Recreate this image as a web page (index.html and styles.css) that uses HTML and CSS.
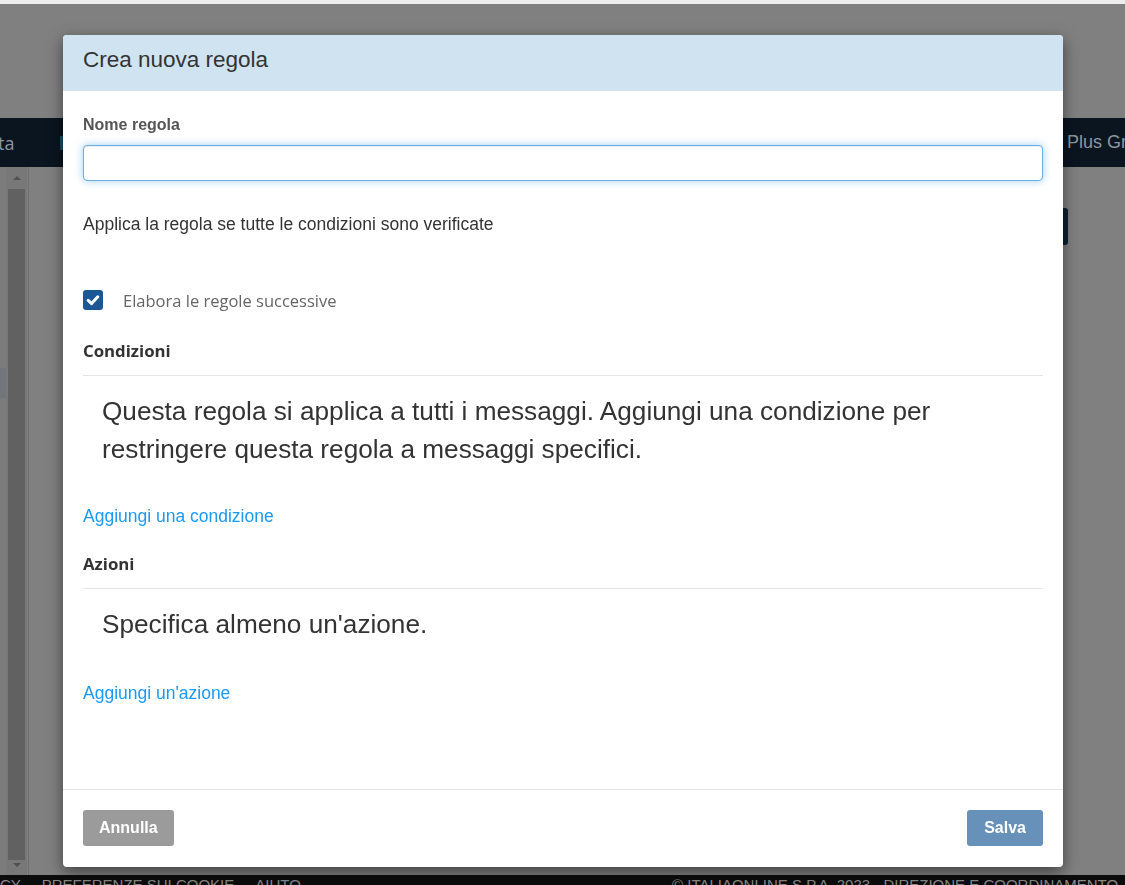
FILE: index.html
```html
<!DOCTYPE html>
<html lang="it">
<head>
<meta charset="UTF-8">
<meta name="viewport" content="width=device-width, initial-scale=1.0">
<title>Crea nuova regola</title>
<link rel="stylesheet" href="styles.css">
</head>
<body>

<div class="page">
    <div class="topline"></div>
    <div class="masthead"></div>

    <nav class="navbar">
        <span class="nav-cut">ta</span>
        <span class="nav-tab"><span class="nav-tab-mark"></span></span>
        <span class="nav-right">Plus Gr</span>
    </nav>

    <div class="main">
        <aside class="sidebar">
            <div class="side-strip"><div class="side-mark"></div></div>
            <div class="scrollbar">
                <span class="arrow arrow-up"></span>
                <div class="thumb"></div>
                <span class="arrow arrow-down"></span>
            </div>
        </aside>
        <div class="content">
            <span class="bg-btn"></span>
        </div>
    </div>

    <footer class="site-footer">
        <div class="footer-left">
            <span class="footer-cut">PRIVACY</span>
            <span>-</span>
            <span>PREFERENZE SUI COOKIE</span>
            <span>-</span>
            <span>AIUTO</span>
        </div>
        <div class="footer-right">© ITALIAONLINE S.P.A. 2023 - DIREZIONE E COORDINAMENTO</div>
    </footer>
</div>

<!-- Finestra modale -->
<div class="modal">
    <div class="modal-header">
        <h2 class="modal-title">Crea nuova regola</h2>
    </div>

    <div class="modal-body">
        <label class="field-label" for="nome">Nome regola</label>
        <input class="field-input" id="nome" type="text">

        <p class="apply-text">Applica la regola se tutte le condizioni sono verificate</p>

        <div class="check-row">
            <svg class="check-box" width="20" height="20" viewBox="0 0 20 20">
                <rect width="20" height="20" rx="3" fill="#1b5795"/>
                <path d="M5.2 10.4 L8.6 13.6 L14.8 6.8" fill="none" stroke="#ffffff" stroke-width="3" stroke-linecap="round" stroke-linejoin="round"/>
            </svg>
            <span class="check-label">Elabora le regole successive</span>
        </div>

        <section class="rule-section first">
            <h4 class="section-title">Condizioni</h4>
            <p class="empty-note">Questa regola si applica a tutti i messaggi. Aggiungi una condizione per restringere questa regola a messaggi specifici.</p>
            <a class="add-link" href="#">Aggiungi una condizione</a>
        </section>

        <section class="rule-section">
            <h4 class="section-title">Azioni</h4>
            <p class="empty-note">Specifica almeno un'azione.</p>
            <a class="add-link last" href="#">Aggiungi un'azione</a>
        </section>
    </div>

    <div class="modal-footer">
        <button class="btn btn-annulla">Annulla</button>
        <button class="btn btn-salva">Salva</button>
    </div>
</div>

</body>
</html>
```

FILE: styles.css
```css
/* Pagina di sfondo (oscurata dal modale) */
body {
    margin: 0;
    height: 885px;
    overflow: hidden;
    background-color: #808080;
    font-family: "Liberation Sans", Arial, sans-serif;
    color: #333333;
}

.page {
    display: flex;
    flex-direction: column;
    height: 885px;
}

.page > * {
    flex-shrink: 0;
}

.topline {
    height: 4px;
    background-color: #ededed;
}

.masthead {
    height: 114px;
}

/* Barra di navigazione */
.navbar {
    height: 49px;
    display: flex;
    align-items: center;
    background-color: #0a1520;
    overflow: hidden;
    white-space: nowrap;
    font-size: 18px;
    color: #8d959e;
}

.nav-cut {
    flex: 0 0 62px;
    margin-left: -2px;
    font-family: "Open Sans", sans-serif;
}

.nav-tab {
    flex: 0 0 1007px;
    display: flex;
}

.nav-tab-mark {
    width: 20px;
    height: 14px;
    background-color: #17506e;
}

.nav-right {
    flex: 0 0 auto;
}

/* Area principale */
.main {
    height: 708px;
    display: flex;
}

.sidebar {
    width: 28px;
    display: flex;
    border-right: 1px solid #6f6f6f;
}

.side-strip {
    width: 6px;
    background-color: #7b7b7b;
    padding-top: 201px;
}

.side-mark {
    height: 30px;
    background-color: #71767d;
}

.scrollbar {
    width: 21px;
    padding: 0 2px;
    box-sizing: border-box;
    background-color: #787878;
    display: flex;
    flex-direction: column;
    align-items: center;
}

.arrow {
    width: 0;
    height: 0;
    border-left: 4px solid transparent;
    border-right: 4px solid transparent;
    margin: 9px 0 9px;
}

.arrow-up {
    border-bottom: 4px solid #505050;
}

.arrow-down {
    border-top: 4px solid #505050;
    margin: 3px 0 0;
}

.thumb {
    width: 17px;
    height: 671px;
    background-color: #616161;
}

.content {
    flex: 1;
    display: flex;
    justify-content: flex-end;
    padding: 41px 57px 0 0;
}

.bg-btn {
    width: 120px;
    height: 37px;
    border-radius: 3px;
    background-color: #0d2035;
}

/* Piè di pagina */
.site-footer {
    height: 30px;
    display: flex;
    background-color: #0c0c0c;
    color: #8a8a8a;
    font-size: 15px;
    line-height: 20px;
    white-space: nowrap;
    overflow: hidden;
}

.footer-left {
    flex: 0 0 672px;
    display: flex;
    gap: 8px;
}

.footer-cut {
    margin-left: -44px;
}

/* Finestra modale */
.modal {
    position: fixed;
    top: 35px;
    left: 63px;
    width: 1000px;
    height: 832px;
    display: flex;
    flex-direction: column;
    background-color: #ffffff;
    border-radius: 4px;
    box-shadow: 0 5px 15px rgba(0, 0, 0, 0.5);
    overflow: hidden;
}

.modal-header {
    height: 56px;
    box-sizing: border-box;
    padding: 12px 20px 0;
    background-color: #d0e3f1;
}

.modal-title {
    margin: 0;
    font-size: 22.5px;
    font-weight: normal;
    line-height: 26px;
    color: #333333;
}

.modal-body {
    flex: 1;
    padding: 24px 20px 0;
}

.field-label {
    display: block;
    font-size: 16px;
    font-weight: bold;
    line-height: 20px;
    color: #555555;
    margin-bottom: 10px;
}

.field-input {
    display: block;
    width: 100%;
    height: 36px;
    box-sizing: border-box;
    border: 1px solid #66afe9;
    border-radius: 4px;
    outline: none;
    box-shadow: inset 0 1px 1px rgba(0, 0, 0, 0.075), 0 0 8px rgba(102, 175, 233, 0.6);
}

.apply-text {
    margin: 32px 0 0;
    font-size: 17.5px;
    line-height: 22px;
}

.check-row {
    margin-top: 55px;
    height: 20px;
    display: flex;
    align-items: center;
    gap: 20px;
}

.check-box {
    display: block;
}

.check-label {
    font-family: "Open Sans", sans-serif;
    font-size: 16.5px;
    color: #666666;
}

.rule-section {
    margin-top: 26px;
}

.rule-section.first {
    margin-top: 30px;
}

.section-title {
    margin: 0;
    padding-bottom: 13px;
    border-bottom: 1px solid #e5e5e5;
    font-family: "Open Sans", sans-serif;
    font-size: 16.8px;
    font-weight: bold;
    line-height: 22px;
    color: #333333;
}

.empty-note {
    margin: 16px 0 0;
    padding-left: 19px;
    font-size: 26.2px;
    line-height: 38px;
    color: #333333;
}

.add-link {
    display: inline-block;
    margin-top: 37px;
    font-size: 17.5px;
    line-height: 22px;
    color: #1a9af5;
    text-decoration: none;
}

.add-link.last {
    margin-top: 39px;
}

.modal-footer {
    display: flex;
    justify-content: space-between;
    padding: 20px 20px 21px;
    border-top: 1px solid #e5e5e5;
}

/* Pulsanti */
.btn {
    height: 36px;
    padding: 0 16px;
    border: none;
    border-radius: 3px;
    font-family: "Liberation Sans", Arial, sans-serif;
    font-size: 16px;
    font-weight: bold;
    color: #ffffff;
}

.btn-annulla {
    background-color: #9b9b9b;
}

.btn-salva {
    padding: 0 17px;
    background-color: #6791b8;
}
```
